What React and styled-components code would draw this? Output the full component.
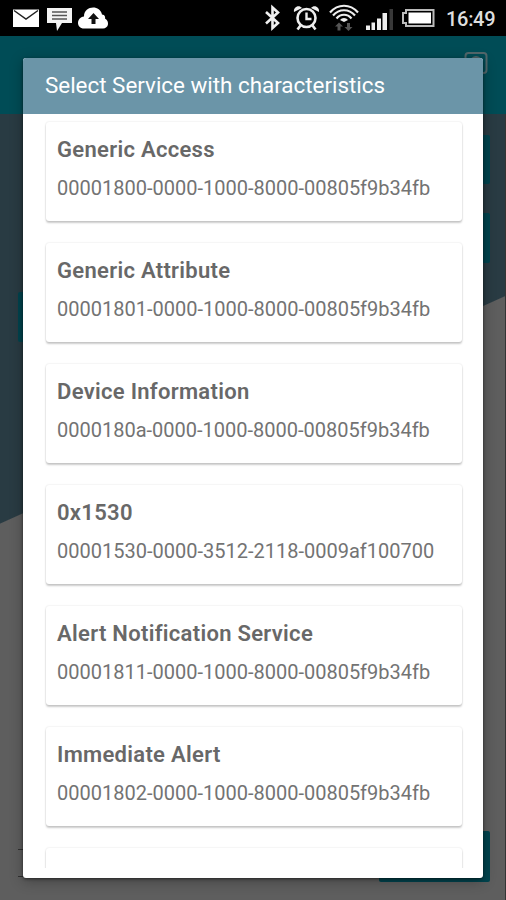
import React from 'react'
import styled, { createGlobalStyle } from 'styled-components'

const GlobalStyle = createGlobalStyle`
    body {
        margin: 0;
        font-family: Roboto, "Liberation Sans", sans-serif;
    }
`;

const Screen = styled.div`
    width: 506px;
    height: 900px;
    display: flex;
    flex-direction: column;
    position: relative;
    overflow: hidden;
    background-color: #5e5e5e;
`;

const StatusBar = styled.div`
    height: 36px;
    flex-shrink: 0;
    display: flex;
    justify-content: space-between;
    background-color: #000000;

    svg {
        display: block;
    }
`;

const Clock = styled.span`
    width: 60px;
    line-height: 38px;
    font-size: 20px;
    font-weight: 500;
    letter-spacing: -0.3px;
    color: #dedede;
`;

const StatusGroup = styled.div`
    display: flex;
`;

const AppBar = styled.div`
    height: 78px;
    flex-shrink: 0;
    display: flex;
    justify-content: flex-end;
    box-sizing: border-box;
    padding: 15px 18px 0 0;
    background-color: #004c56;
`;

const Page = styled.div`
    flex: 1;
    display: flex;
    flex-direction: column;
    border-right: 1px solid #353535;
    background: linear-gradient(155.75deg, #293b43 0, #293b43 373px, #5e5e5e 374px);
`;

const PageButton = styled.div`
    width: ${props => props.$width}px;
    height: ${props => props.$height}px;
    flex-shrink: 0;
    box-sizing: border-box;
    align-self: ${props => (props.$left ? 'flex-start' : 'flex-end')};
    margin: ${props => props.$top}px 15px 0 18px;
    border-radius: 2px;
    background-color: #00444e;
`;

const Field = styled.div`
    width: 200px;
    height: 26px;
    margin: 507px 0 -46px 18px;
    border-top: 1px solid #303030;
    border-bottom: 1px solid #303030;
`;

const Dialog = styled.div`
    width: 460px;
    height: 820px;
    position: absolute;
    top: 58px;
    left: 23px;
    display: flex;
    flex-direction: column;
    border-radius: 3px;
    overflow: hidden;
    background-color: #ffffff;
    box-shadow: 0 1px 3px rgba(0, 0, 0, 0.5), 0 3px 14px rgba(0, 0, 0, 0.3);
`;

const DialogTitle = styled.div`
    height: 56px;
    flex-shrink: 0;
    padding-left: 22px;
    line-height: 55px;
    font-size: 22.400px;
    color: #ffffff;
    background-color: #6b95a8;
`;

const ServiceList = styled.div`
    flex: 1;
    display: flex;
    flex-direction: column;
    gap: 22px;
    padding: 8px 21px 0 23px;
    margin-bottom: 10px;
    overflow: hidden;
`;

const ServiceCard = styled.div`
    height: 99px;
    flex-shrink: 0;
    box-sizing: border-box;
    padding: 14px 0 0 11px;
    border-radius: 3px;
    background-color: #ffffff;
    box-shadow: 0 0 2px rgba(0, 0, 0, 0.14), 0 2px 2px rgba(0, 0, 0, 0.2);

    h4 {
        margin: 0 0 12px;
        line-height: 28px;
        font-size: 22px;
        font-weight: 600;
        letter-spacing: 0.3px;
        color: #686868;
        white-space: nowrap;
    }

    span {
        display: block;
        line-height: 24px;
        font-size: 20px;
        color: #737373;
        white-space: nowrap;
    }
`;

const services = [
    { name: 'Generic Access', uuid: '00001800-0000-1000-8000-00805f9b34fb' },
    { name: 'Generic Attribute', uuid: '00001801-0000-1000-8000-00805f9b34fb' },
    { name: 'Device Information', uuid: '0000180a-0000-1000-8000-00805f9b34fb' },
    { name: '0x1530', uuid: '00001530-0000-3512-2118-0009af100700' },
    { name: 'Alert Notification Service', uuid: '00001811-0000-1000-8000-00805f9b34fb' },
    { name: 'Immediate Alert', uuid: '00001802-0000-1000-8000-00805f9b34fb' },
]

const NotificationIcons = () => (
    <svg width='120' height='36' viewBox='0 0 120 36'>
        <path d='M13 9.500h26V27H13z' fill='#fff' />
        <path d='M14 10.500l12 8.500 12-8.500' fill='none' stroke='#222' strokeWidth='1.5' />
        <path d='M47 8h25v15H62l-5 8-1-8h-9z' fill='#f4f4f4' />
        <path d='M52 12h15M52 15.500h15M52 19h15' stroke='#555' strokeWidth='1.500' />
        <path d='M84 28.500c-8 0-8-11 0-12 0-11 16-12 18-2 3 0 3.500 3 3 4 5 3 3.500 10-2 10z' fill='#fff' />
        <path d='M93.500 13l5.500 6h-3.500v5h-4v-5H88z' fill='#111' />
    </svg>
)

const SystemIcons = () => (
    <svg width='186' height='36' viewBox='260 0 186 36' fill='none'>
        <path d='M266 12l12 11-5.500 5V7.500l5.500 5-12 11' stroke='#f0f0f0' strokeWidth='2.600' />
        <g stroke='#eee'>
            <circle cx='306.500' cy='18' r='9' strokeWidth='2.600' />
            <path d='M306.500 12.500v6.500h5' strokeWidth='2.400' />
            <path d='M300.500 25.500l-3 4M312.500 25.500l3 4' strokeWidth='2.600' />
        </g>
        <path d='M294 12c-1-5 5-8 8-4zM319 12c1-5-5-8-8-4z' fill='#eee' />
        <g stroke='#eee' strokeWidth='2.200'>
            <path d='M330 12.500c8-9 20-9 28 0' />
            <path d='M333 15.500c6-7 16-7 22 0' />
            <path d='M336.500 18.500c4-5 11-5 15 0' />
        </g>
        <path d='M340 20a5 5 0 0 1 8 0l-4 2z' fill='#eee' />
        <path d='M339 22.500l4 4h-2.500v4h-3v-4H335z' fill='#555' />
        <path d='M348.500 31l4-4H350v-4h-3v4h-2.500z' fill='#555' />
        <path d='M366 25.500h4V30h-4zM371.500 22.500h3.500V30h-3.500zM377 18.500h4V30h-4zM382.500 13h4.500v17h-4.500z' fill='#eee' />
        <path d='M389.500 9h3.500v21h-3.500z' fill='#383838' />
        <path d='M406 10h27.500v16H406v-3h-3v-10h3z' stroke='#bbb' strokeWidth='2' />
        <path d='M408.500 12.500h22.500v11h-22.500z' fill='#fff' />
    </svg>
)

const CameraIcon = () => (
    <svg width='24' height='24' viewBox='0 0 24 24' fill='none' stroke='#53676b' strokeWidth='2'>
        <rect x='1.500' y='2' width='21' height='20' rx='3' />
        <circle cx='12' cy='11' r='5' />
    </svg>
)

const App = () => {
    return (
        <>
            <GlobalStyle />
            <Screen>
                <StatusBar>
                    <NotificationIcons />
                    <StatusGroup>
                        <SystemIcons />
                        <Clock>16:49</Clock>
                    </StatusGroup>
                </StatusBar>
                <AppBar>
                    <CameraIcon />
                </AppBar>
                <Page>
                    <PageButton $width={100} $height={49} $top={21} />
                    <PageButton $width={100} $height={50} $top={29} />
                    <PageButton $left $width={100} $height={50} $top={29} />
                    <Field />
                    <PageButton $width={111} $height={51} $top={0} />
                </Page>
                <Dialog>
                    <DialogTitle>Select Service with characteristics</DialogTitle>
                    <ServiceList>
                        {services.map(service => (
                            <ServiceCard key={service.uuid}>
                                <h4>{service.name}</h4>
                                <span>{service.uuid}</span>
                            </ServiceCard>
                        ))}
                        <ServiceCard />
                    </ServiceList>
                </Dialog>
            </Screen>
        </>
    )
}

export default App
